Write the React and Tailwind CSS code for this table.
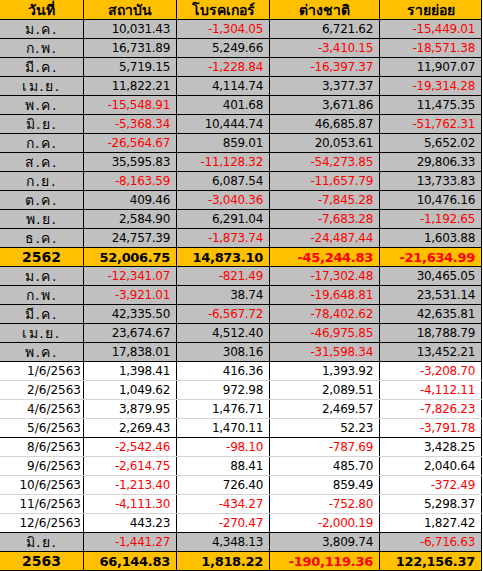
import React from 'react';

const months = [
  ['ม.ค.', '10,031.43', '-1,304.05', '6,721.62', '-15,449.01'],
  ['ก.พ.', '16,731.89', '5,249.66', '-3,410.15', '-18,571.38'],
  ['มี.ค.', '5,719.15', '-1,228.84', '-16,397.37', '11,907.07'],
  ['เม.ย.', '11,822.21', '4,114.74', '3,377.37', '-19,314.28'],
  ['พ.ค.', '-15,548.91', '401.68', '3,671.86', '11,475.35'],
  ['มิ.ย.', '-5,368.34', '10,444.74', '46,685.87', '-51,762.31'],
  ['ก.ค.', '-26,564.67', '859.01', '20,053.61', '5,652.02'],
  ['ส.ค.', '35,595.83', '-11,128.32', '-54,273.85', '29,806.33'],
  ['ก.ย.', '-8,163.59', '6,087.54', '-11,657.79', '13,733.83'],
  ['ต.ค.', '409.46', '-3,040.36', '-7,845.28', '10,476.16'],
  ['พ.ย.', '2,584.90', '6,291.04', '-7,683.28', '-1,192.65'],
  ['ธ.ค.', '24,757.39', '-1,873.74', '-24,487.44', '1,603.88'],
];

const months63 = [
  ['ม.ค.', '-12,341.07', '-821.49', '-17,302.48', '30,465.05'],
  ['ก.พ.', '-3,921.01', '38.74', '-19,648.81', '23,531.14'],
  ['มี.ค.', '42,335.50', '-6,567.72', '-78,402.62', '42,635.81'],
  ['เม.ย.', '23,674.67', '4,512.40', '-46,975.85', '18,788.79'],
  ['พ.ค.', '17,838.01', '308.16', '-31,598.34', '13,452.21'],
];

// last flag: true = black line under the row (end of week)
const days = [
  ['1/6/2563', '1,398.41', '416.36', '1,393.92', '-3,208.70', false],
  ['2/6/2563', '1,049.62', '972.98', '2,089.51', '-4,112.11', false],
  ['4/6/2563', '3,879.95', '1,476.71', '2,469.57', '-7,826.23', false],
  ['5/6/2563', '2,269.43', '1,470.11', '52.23', '-3,791.78', true],
  ['8/6/2563', '-2,542.46', '-98.10', '-787.69', '3,428.25', false],
  ['9/6/2563', '-2,614.75', '88.41', '485.70', '2,040.64', false],
  ['10/6/2563', '-1,213.40', '726.40', '859.49', '-372.49', false],
  ['11/6/2563', '-4,111.30', '-434.27', '-752.80', '5,298.37', false],
  ['12/6/2563', '443.23', '-270.47', '-2,000.19', '1,827.42', true],
];

const font = { fontFamily: "Tahoma, 'DejaVu Sans', 'Noto Sans', sans-serif" };

const Num = ({ v, bold }) => (
  <div
    className={`flex items-center justify-end pr-[6px] border-r border-black tracking-[-0.3px] ${
      v.startsWith('-') ? 'text-[#ff0000]' : 'text-black'
    } ${bold ? 'font-bold text-[13px]' : ''}`}
  >
    {v}
  </div>
);

const Row = ({ cells, bg, line, bold, dateLabel, height = 'h-[19px]' }) => (
  <div
    className={`grid grid-cols-[84px_93px_93px_110px_102px] ${height} border-b ${line} ${bg}`}
  >
    <div
      className={`flex items-center border-r border-black ${
        dateLabel ? 'justify-end pr-[2px]' : 'justify-center'
      } ${bold ? 'font-bold text-[14px]' : dateLabel ? '' : 'text-[14px] tracking-[1.5px]'}`}
    >
      {cells[0]}
    </div>
    {cells.slice(1, 5).map((v, i) => (
      <Num key={i} v={v} bold={bold} />
    ))}
  </div>
);

export default function App() {
  return (
    <div className="w-[483px] h-[571px] bg-white overflow-hidden text-[12px] leading-none" style={font}>
      <div className="w-[482px]">
        <div className="grid grid-cols-[84px_93px_93px_110px_102px] h-[20px] border-b border-black bg-[#ffc000] font-bold text-[14px]">
          {['วันที่', 'สถาบัน', 'โบรคเกอร์', 'ต่างชาติ', 'รายย่อย'].map((h) => (
            <div key={h} className="flex items-center justify-center border-r border-black">
              {h}
            </div>
          ))}
        </div>
        {months.map((r) => (
          <Row key={'a' + r[0]} cells={r} bg="bg-[#c0c0c0]" line="border-black" />
        ))}
        <Row cells={['2562', '52,006.75', '14,873.10', '-45,244.83', '-21,634.99']} bg="bg-[#ffc000]" line="border-black" bold />
        {months63.map((r) => (
          <Row key={'b' + r[0]} cells={r} bg="bg-[#c0c0c0]" line="border-black" />
        ))}
        {days.map((r) => (
          <Row
            key={r[0]}
            cells={r}
            bg="bg-white"
            line={r[5] ? 'border-black' : 'border-[#d4d4d4]'}
            dateLabel
          />
        ))}
        <Row cells={['มิ.ย.', '-1,441.27', '4,348.13', '3,809.74', '-6,716.63']} bg="bg-[#c0c0c0]" line="border-black" />
        <Row cells={['2563', '66,144.83', '1,818.22', '-190,119.36', '122,156.37']} bg="bg-[#ffc000]" line="border-black" bold />
      </div>
    </div>
  );
}
